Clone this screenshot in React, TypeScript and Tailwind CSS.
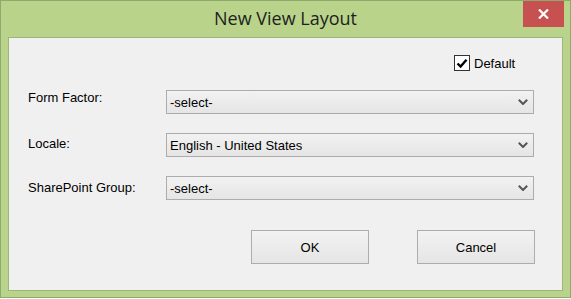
import React from "react"

const FONT = "font-['Liberation_Sans',Arial,sans-serif]"

function Chevron() {
  return (
    <svg width="10" height="6" viewBox="0 0 10 6" className="shrink-0">
      <polyline points="0.8,0.8 5,5 9.2,0.8" fill="none" stroke="#555555" strokeWidth="2" />
    </svg>
  )
}

function Select({ value }: { value: string }) {
  return (
    <div className="flex h-[24px] w-[368px] items-center justify-between border border-[#acacac] bg-linear-to-b from-[#f2f2f2] to-[#e5e5e5] pl-[3px] pr-[5px]">
      <span className="leading-[15px] text-[#000]">{value}</span>
      <Chevron />
    </div>
  )
}

function Row({ label, value, offset }: { label: string; value: string; offset: string }) {
  return (
    <div className="flex items-start">
      <div className={`w-[138px] leading-[15px] ${offset}`}>{label}</div>
      <Select value={value} />
    </div>
  )
}

function Button({ children }: { children: React.ReactNode }) {
  return (
    <button className="flex h-[34px] w-[118px] items-center justify-center border border-[#adadad] bg-linear-to-b from-[#f2f2f2] to-[#e5e5e5] leading-[15px] text-black">
      {children}
    </button>
  )
}

export default function App() {
  return (
    <div className={`h-[299px] w-[571px] bg-white text-[13px] text-black ${FONT}`}>
      <div className="flex h-[298px] flex-col border border-[#8fa96c] bg-[#b9d38b]">
        {/* title bar */}
        <div className="relative flex h-[36px] shrink-0 items-start justify-center">
          <span className="mt-[5px] font-['Open_Sans',sans-serif] text-[18px] leading-[24px] text-[#1e1e1e]">
            New View Layout
          </span>
          <div className="absolute right-[6px] top-0 flex h-[26px] w-[41px] items-center justify-center bg-[#c75050]">
            <svg width="11" height="10" viewBox="0 0 11 10" className="mb-[1px]">
              <path d="M1 0.5 L10 9.5 M10 0.5 L1 9.5" stroke="#ffffff" strokeWidth="2.2" />
            </svg>
          </div>
        </div>

        {/* client area */}
        <div className="mx-[7px] flex h-[254px] flex-col border border-[#9cb67b] bg-[#f0f0f0]">
          <div className="mt-[17px] flex items-center pl-[445px]">
            <div className="flex h-[16px] w-[16px] items-center justify-center border border-[#333333] bg-white">
              <svg width="12" height="11" viewBox="0 0 12 11">
                <path d="M1.5 5.5 L4.6 8.6 L10.5 1.8" fill="none" stroke="#000" strokeWidth="2.4" />
              </svg>
            </div>
            <span className="ml-[4px] leading-[15px]">Default</span>
          </div>

          <div className="mt-[19px] flex flex-col gap-[19px] pl-[19px]">
            <Row label="Form Factor:" value="-select-" offset="mt-0" />
            <Row label="Locale:" value="English - United States" offset="mt-[3px]" />
            <Row label="SharePoint Group:" value="-select-" offset="mt-[4px]" />
          </div>

          <div className="mt-[30px] flex gap-[48px] pl-[242px]">
            <Button>OK</Button>
            <Button>Cancel</Button>
          </div>
        </div>
      </div>
    </div>
  )
}
